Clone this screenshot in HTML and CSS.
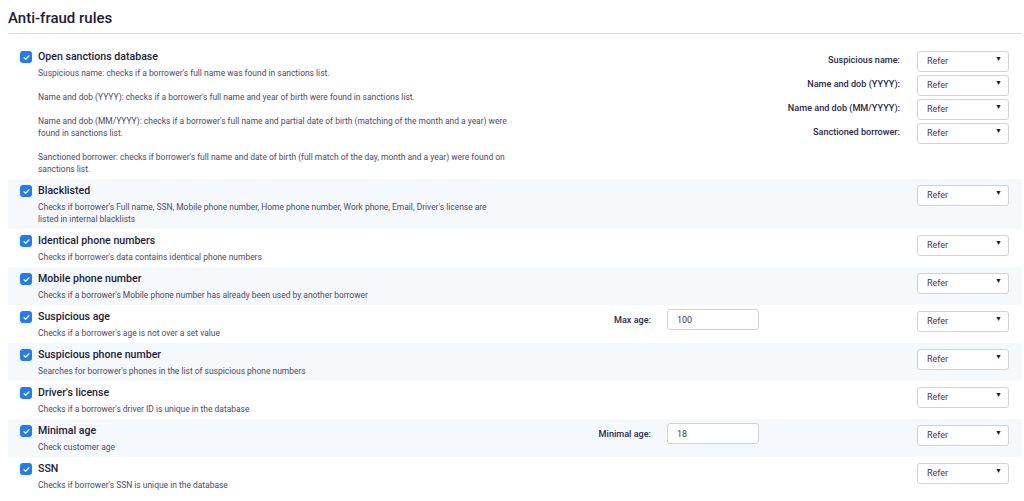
FILE: index.html
```html
<!DOCTYPE html>
<html>
<head>
  <title>Anti-fraud rules</title>
  <link rel="stylesheet" href="styles.css">
</head>
<body>
  <h1 class="page-title">Anti-fraud rules</h1>

  <div class="rules">
    <!-- open sanctions has its own set of selects -->
    <div class="rule">
      <div class="rule-main">
        <label class="rule-title"><span class="check"><svg viewBox="0 0 12 12"><path d="M3.4 6.2l1.7 1.7 3.5-3.7"/></svg></span>Open sanctions database</label>
        <div class="rule-desc">
          <p>Suspicious name: checks if a borrower's full name was found in sanctions list.</p>
          <p>Name and dob (YYYY): checks if a borrower's full name and year of birth were found in sanctions list.</p>
          <p>Name and dob (MM/YYYY): checks if a borrower's full name and partial date of birth (matching of the month and a year) were found in sanctions list.</p>
          <p>Sanctioned borrower: checks if borrower's full name and date of birth (full match of the day, month and a year) were found on sanctions list.</p>
        </div>
      </div>
      <div class="sanction-selects">
        <span class="field-label">Suspicious name:</span>
        <span class="select"><select><option>Refer</option></select></span>
        <span class="field-label">Name and dob (YYYY):</span>
        <span class="select"><select><option>Refer</option></select></span>
        <span class="field-label">Name and dob (MM/YYYY):</span>
        <span class="select"><select><option>Refer</option></select></span>
        <span class="field-label">Sanctioned borrower:</span>
        <span class="select"><select><option>Refer</option></select></span>
      </div>
    </div>

    <div class="rule">
      <div class="rule-main">
        <label class="rule-title"><span class="check"><svg viewBox="0 0 12 12"><path d="M3.4 6.2l1.7 1.7 3.5-3.7"/></svg></span>Blacklisted</label>
        <div class="rule-desc">Checks if borrower's Full name, SSN, Mobile phone number, Home phone number, Work phone, Email, Driver's license are listed in internal blacklists</div>
      </div>
      <div class="rule-param"></div>
      <span class="select"><select><option>Refer</option></select></span>
    </div>

    <div class="rule">
      <div class="rule-main">
        <label class="rule-title"><span class="check"><svg viewBox="0 0 12 12"><path d="M3.4 6.2l1.7 1.7 3.5-3.7"/></svg></span>Identical phone numbers</label>
        <div class="rule-desc">Checks if borrower's data contains identical phone numbers</div>
      </div>
      <div class="rule-param"></div>
      <span class="select"><select><option>Refer</option></select></span>
    </div>

    <div class="rule">
      <div class="rule-main">
        <label class="rule-title"><span class="check"><svg viewBox="0 0 12 12"><path d="M3.4 6.2l1.7 1.7 3.5-3.7"/></svg></span>Mobile phone number</label>
        <div class="rule-desc">Checks if a borrower's Mobile phone number has already been used by another borrower</div>
      </div>
      <div class="rule-param"></div>
      <span class="select"><select><option>Refer</option></select></span>
    </div>

    <div class="rule">
      <div class="rule-main">
        <label class="rule-title"><span class="check"><svg viewBox="0 0 12 12"><path d="M3.4 6.2l1.7 1.7 3.5-3.7"/></svg></span>Suspicious age</label>
        <div class="rule-desc">Checks if a borrower's age is not over a set value</div>
      </div>
      <div class="rule-param">
        <span class="field-label">Max age:</span>
        <input class="text-input" type="text" value="100">
      </div>
      <span class="select"><select><option>Refer</option></select></span>
    </div>

    <div class="rule">
      <div class="rule-main">
        <label class="rule-title"><span class="check"><svg viewBox="0 0 12 12"><path d="M3.4 6.2l1.7 1.7 3.5-3.7"/></svg></span>Suspicious phone number</label>
        <div class="rule-desc">Searches for borrower's phones in the list of suspicious phone numbers</div>
      </div>
      <div class="rule-param"></div>
      <span class="select"><select><option>Refer</option></select></span>
    </div>

    <div class="rule">
      <div class="rule-main">
        <label class="rule-title"><span class="check"><svg viewBox="0 0 12 12"><path d="M3.4 6.2l1.7 1.7 3.5-3.7"/></svg></span>Driver's license</label>
        <div class="rule-desc">Checks if a borrower's driver ID is unique in the database</div>
      </div>
      <div class="rule-param"></div>
      <span class="select"><select><option>Refer</option></select></span>
    </div>

    <div class="rule">
      <div class="rule-main">
        <label class="rule-title"><span class="check"><svg viewBox="0 0 12 12"><path d="M3.4 6.2l1.7 1.7 3.5-3.7"/></svg></span>Minimal age</label>
        <div class="rule-desc">Check customer age</div>
      </div>
      <div class="rule-param">
        <span class="field-label">Minimal age:</span>
        <input class="text-input" type="text" value="18">
      </div>
      <span class="select"><select><option>Refer</option></select></span>
    </div>

    <div class="rule">
      <div class="rule-main">
        <label class="rule-title"><span class="check"><svg viewBox="0 0 12 12"><path d="M3.4 6.2l1.7 1.7 3.5-3.7"/></svg></span>SSN</label>
        <div class="rule-desc">Checks if borrower's SSN is unique in the database</div>
      </div>
      <div class="rule-param"></div>
      <span class="select"><select><option>Refer</option></select></span>
    </div>
  </div>
</body>
</html>
```

FILE: styles.css
```css
body {
  margin: 0;
  padding: 0 2px 0 8px;
  font-family: Roboto, "Liberation Sans", sans-serif;
  color: #1f1d3d;
  background: #fff;
}

.page-title {
  margin: 0;
  padding: 9px 0 6px;
  font-size: 15px;
  font-weight: 500;
  line-height: 18px;
  color: #1c1a3a;
  border-bottom: 1px solid #d6d9de;
}

.rules {
  margin-top: 11px;
}

.rule {
  display: grid;
  grid-template-columns: 1fr 346px 92px;
  align-items: start;
  padding: 4px 13px 4px 12px;
}

.rule:nth-child(even) {
  background-color: #f5f9fc;
}

.rule-title {
  display: flex;
  align-items: center;
  gap: 6px;
  font-size: 10.6px;
  font-weight: 500;
  line-height: 16px;
  color: #1c1a3a;
}

.check {
  display: inline-flex;
  align-items: center;
  justify-content: center;
  width: 12px;
  height: 12px;
  border-radius: 3px;
  background-color: #1f7cf4;
}

.check svg {
  width: 11px;
  height: 11px;
  fill: none;
  stroke: #fff;
  stroke-width: 1.5;
  stroke-linecap: round;
  stroke-linejoin: round;
}

.rule-desc {
  max-width: 470px;
  margin: 2px 0 0 18px;
  font-size: 8.45px;
  line-height: 12px;
  color: #4b4a66;
}

.rule-desc p {
  margin: 0 0 12px;
}

.rule-desc p:last-child {
  margin-bottom: 0;
}

.sanction-selects {
  grid-column: 2 / 4;
  display: grid;
  grid-template-columns: auto 92px;
  justify-content: end;
  align-items: center;
  column-gap: 17px;
  row-gap: 3px;
}

.rule-param {
  display: flex;
  align-items: center;
}

.field-label {
  font-size: 9.1px;
  font-weight: 500;
  color: #2a2849;
  text-align: right;
}

.rule-param .field-label {
  width: 80px;
  margin-right: 16px;
}

.text-input {
  box-sizing: border-box;
  width: 92px;
  height: 21px;
  padding: 0 9px;
  border: 1px solid #cfd3d9;
  border-radius: 3px;
  font-family: inherit;
  font-size: 9px;
  color: #3b3960;
  background: #fff;
}

.select {
  position: relative;
  display: block;
  width: 92px;
  height: 21px;
}

.select select {
  box-sizing: border-box;
  width: 100%;
  height: 100%;
  padding: 0 9px;
  border: 1px solid #cfd3d9;
  border-radius: 3px;
  font-family: inherit;
  font-size: 9px;
  color: #3b3960;
  background: #fff;
  appearance: none;
  -webkit-appearance: none;
}

.select::after {
  content: "\25BC";
  position: absolute;
  right: 7px;
  top: 6px;
  font-size: 7px;
  line-height: 9px;
  color: #1c1a3a;
  pointer-events: none;
}
```
